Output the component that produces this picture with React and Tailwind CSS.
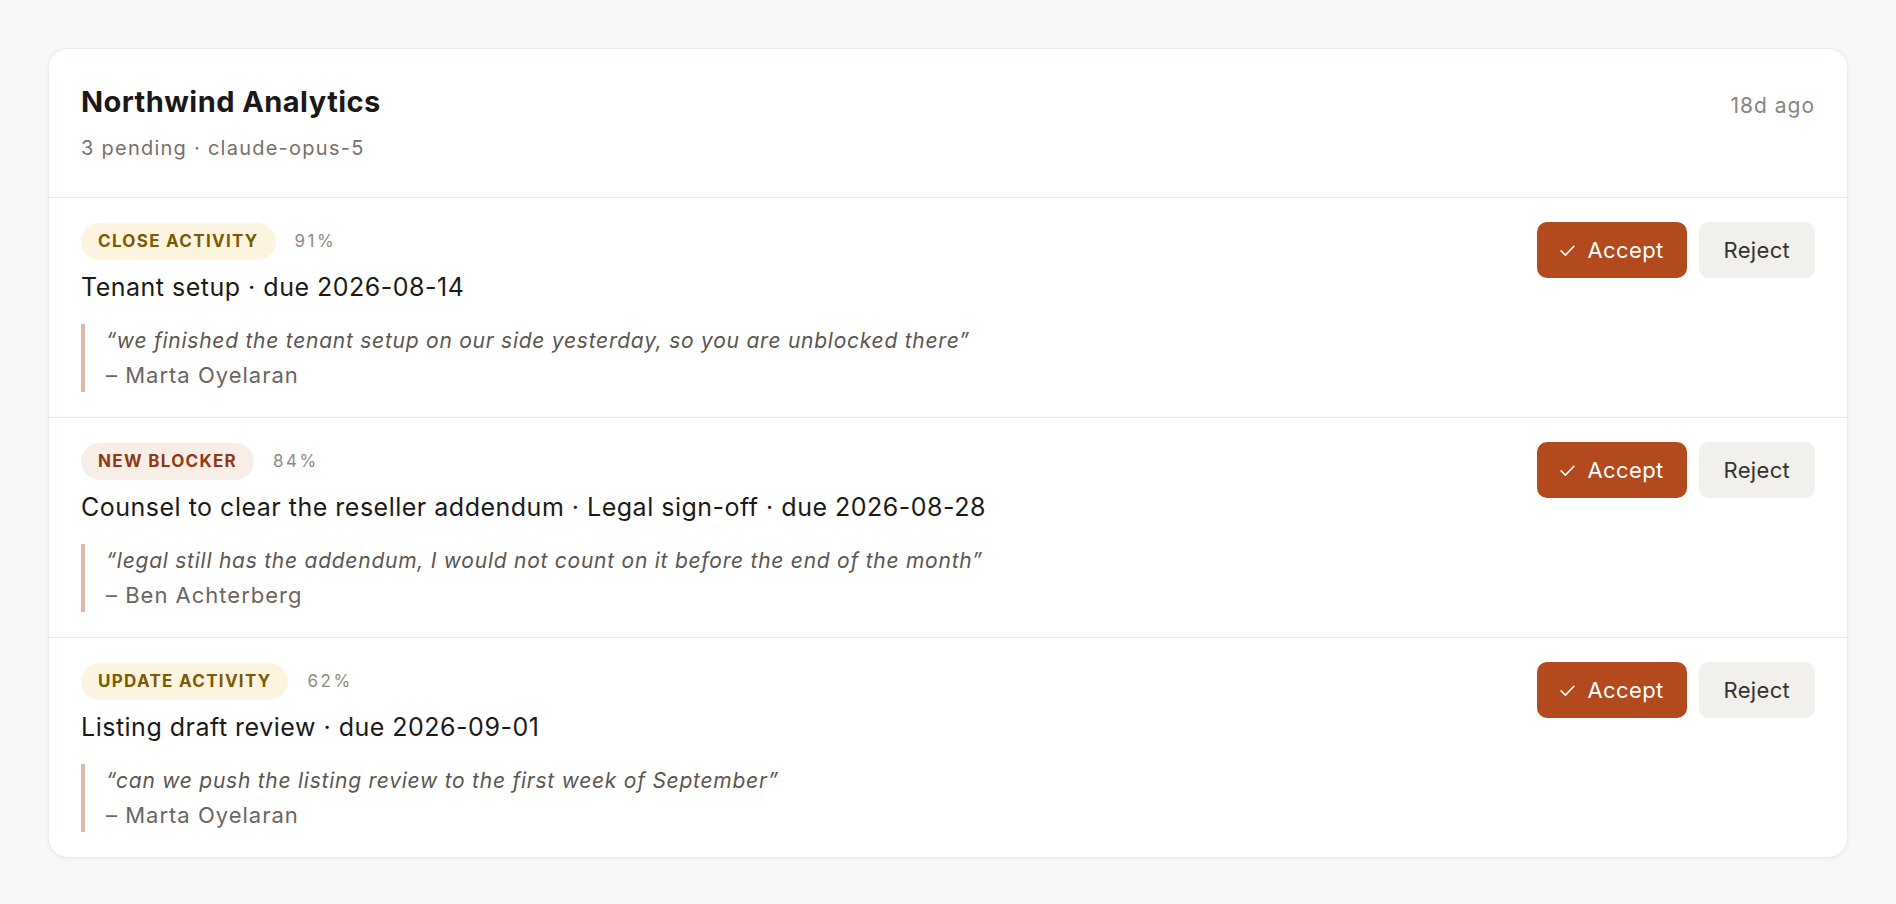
import React from 'react'

const items = [
    {
        kind: 'CLOSE ACTIVITY',
        tone: 'gold',
        pct: '91%',
        title: 'Tenant setup · due 2026-08-14',
        quote: '“we finished the tenant setup on our side yesterday, so you are unblocked there”',
        who: 'Marta Oyelaran',
    },
    {
        kind: 'NEW BLOCKER',
        tone: 'rust',
        pct: '84%',
        title: 'Counsel to clear the reseller addendum · Legal sign-off · due 2026-08-28',
        quote: '“legal still has the addendum, I would not count on it before the end of the month”',
        who: 'Ben Achterberg',
    },
    {
        kind: 'UPDATE ACTIVITY',
        tone: 'gold',
        pct: '62%',
        title: 'Listing draft review · due 2026-09-01',
        quote: '“can we push the listing review to the first week of September”',
        who: 'Marta Oyelaran',
    },
]

function Badge({ kind, tone }) {
    const toneClass = tone === 'rust'
        ? 'bg-[#f7eee7] text-[#8e3a15]'
        : 'bg-[#fdf4df] text-[#7a5b02]'
    return (
        <span className={`inline-flex h-[37px] items-center rounded-full px-[17px] text-[17px] font-bold tracking-[1.3px] ${toneClass}`}>
            {kind}
        </span>
    )
}

function Suggestion({ item }) {
    return (
        <div className="flex items-start justify-between border-t border-[#e8e5e2] px-[32px] pt-[24px] pb-[25px]">
            <div className="flex flex-col">
                <div className="mt-[1px] flex items-center gap-[19px]">
                    <Badge kind={item.kind} tone={item.tone} />
                    <span className="text-[17px] tracking-[2.5px] text-[#8f8a84]">{item.pct}</span>
                </div>
                <div className="mt-[10px] text-[25px] leading-[34px] tracking-[0.5px] text-[#1b1a19]">{item.title}</div>
                <div className="mt-[20px] border-l-4 border-[#dcbaa6] pl-[21px]">
                    <div className="text-[21px] italic leading-[34px] tracking-[0.75px] text-[#5b5651]">{item.quote}</div>
                    <div className="text-[22px] leading-[34px] tracking-[1px] text-[#6a655f]">– {item.who}</div>
                </div>
            </div>
            <div className="flex items-center gap-[12px]">
                <button
                    type="button"
                    className="flex h-[56px] items-center gap-[11px] rounded-[10px] bg-[#b24a1e] pl-[22px] pr-[23px] text-[22px] tracking-[0.4px] text-white"
                >
                    <svg className="h-[17px] w-[17px]" fill="none" stroke="currentColor" viewBox="0 0 24 24">
                        <path strokeLinecap="round" strokeLinejoin="round" strokeWidth={2.2} d="M3 12.5l6 6L21 6" />
                    </svg>
                    Accept
                </button>
                <button
                    type="button"
                    className="flex h-[56px] items-center rounded-[10px] bg-[#f1f0ec] px-[25px] text-[22px] tracking-[0.3px] text-[#36322f]"
                >
                    Reject
                </button>
            </div>
        </div>
    )
}

export default function App() {
    return (
        <div className="min-h-screen bg-[#f9f8f6] p-[48px] font-['Inter',sans-serif]">
            <div className="overflow-hidden rounded-[20px] border border-[#efece8] bg-white shadow-[0_1px_4px_rgba(0,0,0,0.06)]">
                {/* Header */}
                <div className="flex items-start justify-between px-[32px] pt-[35px] pb-[35px]">
                    <div>
                        <h1 className="text-[29px] font-bold leading-[36px] tracking-[0.45px] text-[#1a1918]">Northwind Analytics</h1>
                        <p className="mt-[14px] text-[20px] leading-[28px] tracking-[1.25px] text-[#76706a]">3 pending · claude-opus-5</p>
                    </div>
                    <span className="mt-[8px] text-[21px] leading-[28px] tracking-[1px] text-[#8a847e]">18d ago</span>
                </div>

                {items.map((item, i) => (
                    <Suggestion key={i} item={item} />
                ))}
            </div>
        </div>
    )
}
